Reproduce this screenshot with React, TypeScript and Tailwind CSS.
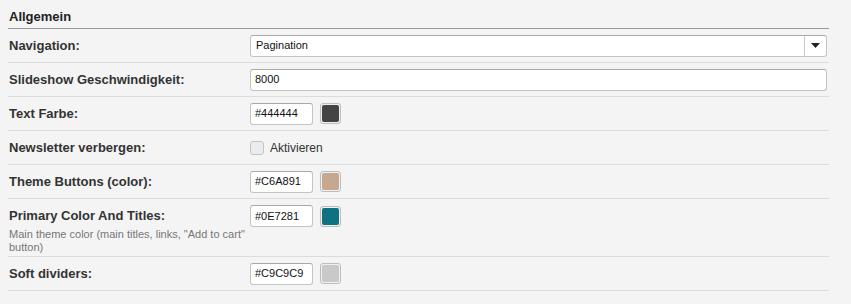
const font = { fontFamily: '"Liberation Sans", Arial, sans-serif' };

function Row({ label, note, children, tall }: { label: string; note?: string; children: React.ReactNode; tall?: boolean }) {
  return (
    <div
      className={
        tall
          ? "flex items-start border-b border-[#dcdcdc] h-[58px] pt-[6px]"
          : "flex items-center border-b border-[#dcdcdc] h-[34px]"
      }
    >
      <div className={tall ? "w-[242px] shrink-0 pl-[1px] pt-[3px]" : "w-[242px] shrink-0 pl-[1px]"}>
        <div className="text-[13px] font-bold text-[#333] leading-[15px]">{label}</div>
        {note && <div className="mt-[5px] text-[11px] leading-[13px] text-[#777] pr-[4px]">{note}</div>}
      </div>
      {children}
    </div>
  );
}

function ColorField({ value }: { value: string }) {
  return (
    <div className="flex items-center">
      <div className="w-[63px] h-[22px] bg-white border border-[#c4c4c4] border-t-[#a8a8a8] rounded-[3px] px-[4px] flex items-center text-[11px] text-[#111]">
        {value}
      </div>
      <div className="ml-[7px] w-[21px] h-[21px] rounded-[3px] border border-[#bdbdbd] bg-[#f0f0f0] p-[1px]">
        <div className="w-full h-full rounded-[2px]" style={{ background: value }} />
      </div>
    </div>
  );
}

export default function App() {
  return (
    <div className="w-[851px] h-[304px] bg-[#f4f4f4] px-[8px]" style={font}>
      <div className="w-[821px]">
        <div className="h-[29px] border-b border-[#999] pt-[9px] pl-[1px] text-[13px] font-bold text-[#222] leading-[15px]">
          Allgemein
        </div>
        <Row label="Navigation:">
          <div className="w-[577px] h-[22px] bg-white border border-[#c4c4c4] border-t-[#a8a8a8] rounded-[3px] flex items-center">
            <div className="flex-1 pl-[5px] text-[11px] text-[#111]">Pagination</div>
            <div className="w-[22px] h-full border-l border-[#c8c8c8] flex items-center justify-center">
              <svg width="9" height="5" viewBox="0 0 9 5">
                <path d="M0 0 H9 L4.5 5 Z" fill="#222" />
              </svg>
            </div>
          </div>
        </Row>
        <Row label="Slideshow Geschwindigkeit:">
          <div className="w-[577px] h-[22px] bg-white border border-[#c4c4c4] border-t-[#a8a8a8] rounded-[3px] px-[4px] flex items-center text-[11px] text-[#111]">
            8000
          </div>
        </Row>
        <Row label="Text Farbe:">
          <ColorField value="#444444" />
        </Row>
        <Row label="Newsletter verbergen:">
          <div className="flex items-center">
            <div className="w-[14px] h-[14px] rounded-[3px] border border-[#c4c4c4] bg-[#ececec]" />
            <span className="ml-[6px] text-[12px] text-[#333]">Aktivieren</span>
          </div>
        </Row>
        <Row label="Theme Buttons (color):">
          <ColorField value="#C6A891" />
        </Row>
        <Row label="Primary Color And Titles:" note={'Main theme color (main titles, links, "Add to cart" button)'} tall>
          <ColorField value="#0E7281" />
        </Row>
        <Row label="Soft dividers:">
          <ColorField value="#C9C9C9" />
        </Row>
      </div>
    </div>
  );
}
